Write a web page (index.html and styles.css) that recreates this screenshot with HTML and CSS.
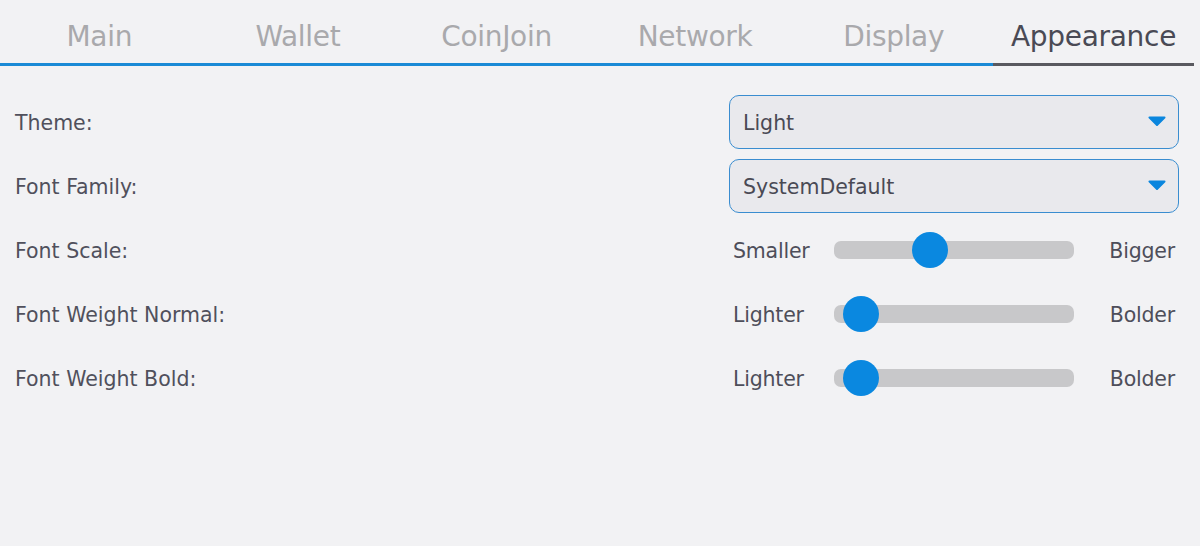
FILE: index.html
```html
<!DOCTYPE html>
<html>
<head>
<meta charset="utf-8">
<link rel="stylesheet" href="styles.css">
</head>
<body>
<div class="tabbar">
  <div class="tab">Main</div>
  <div class="tab">Wallet</div>
  <div class="tab">CoinJoin</div>
  <div class="tab">Network</div>
  <div class="tab">Display</div>
  <div class="tab active">Appearance</div>
</div>
<div class="form">
  <div class="row">
    <div class="label">Theme:</div>
    <div class="combo"><span>Light</span><svg class="arrow" width="18" height="10" viewBox="0 0 18 10"><path d="M1.5 1.5 H16.5 L9 9 Z" fill="#0b86de" stroke="#0b86de" stroke-width="2" stroke-linejoin="round"/></svg></div>
  </div>
  <div class="row">
    <div class="label">Font Family:</div>
    <div class="combo"><span>SystemDefault</span><svg class="arrow" width="18" height="10" viewBox="0 0 18 10"><path d="M1.5 1.5 H16.5 L9 9 Z" fill="#0b86de" stroke="#0b86de" stroke-width="2" stroke-linejoin="round"/></svg></div>
  </div>
  <div class="row">
    <div class="label">Font Scale:</div>
    <div class="slider">
      <span class="lo">Smaller</span>
      <div class="track"><div class="handle" style="left: 78px"></div></div>
      <span class="hi">Bigger</span>
    </div>
  </div>
  <div class="row">
    <div class="label">Font Weight Normal:</div>
    <div class="slider">
      <span class="lo">Lighter</span>
      <div class="track"><div class="handle" style="left: 9px"></div></div>
      <span class="hi">Bolder</span>
    </div>
  </div>
  <div class="row">
    <div class="label">Font Weight Bold:</div>
    <div class="slider">
      <span class="lo">Lighter</span>
      <div class="track"><div class="handle" style="left: 9px"></div></div>
      <span class="hi">Bolder</span>
    </div>
  </div>
</div>
</body>
</html>
```

FILE: styles.css
```css
html, body {
  margin: 0;
  padding: 0;
  background: #f2f2f4;
  width: 1200px;
  height: 546px;
  overflow: hidden;
  font-family: "DejaVu Sans", sans-serif;
}

.tabbar {
  width: 1194px;
  display: grid;
  grid-template-columns: repeat(5, 198.6fr) 201fr;
  height: 66px;
}

.tab {
  box-sizing: border-box;
  height: 66px;
  border-bottom: 3px solid #1a8ad6;
  color: #a9a9ac;
  font-size: 28px;
  text-align: center;
  line-height: 28px;
  padding-top: 23px;
  letter-spacing: -0.3px;
}

.tab.active {
  color: #4a4a55;
  border-bottom-color: #59595f;
}

.form {
  display: flex;
  flex-direction: column;
  gap: 10px;
  padding: 29px 21px 0 15px;
}

.row {
  display: grid;
  grid-template-columns: 1fr 450px;
  height: 54px;
  align-items: center;
}

.label {
  font-size: 20.5px;
  color: #50505c;
  padding-top: 2px;
}

.combo {
  box-sizing: border-box;
  height: 54px;
  border: 1.5px solid #3a8dd0;
  border-radius: 10px;
  background: #e9e9ed;
  display: flex;
  align-items: center;
  justify-content: space-between;
  padding: 2px 12px 0 13px;
  font-size: 20.5px;
  color: #4a4a55;
}

.arrow {
  display: block;
  margin-top: -4px;
}

.slider {
  display: grid;
  grid-template-columns: 105px 240px 1fr;
  align-items: center;
  font-size: 20.5px;
  color: #4e4e5a;
}

.lo, .hi {
  padding-top: 2px;
}

.lo {
  padding-left: 4px;
  letter-spacing: -0.2px;
}

.hi {
  text-align: right;
  padding-right: 4px;
  letter-spacing: -0.2px;
}

.track {
  position: relative;
  height: 18px;
  border-radius: 7px;
  background: #c8c8ca;
}

.handle {
  position: absolute;
  top: -9px;
  width: 36px;
  height: 36px;
  border-radius: 50%;
  background: #0a88e0;
}
```
